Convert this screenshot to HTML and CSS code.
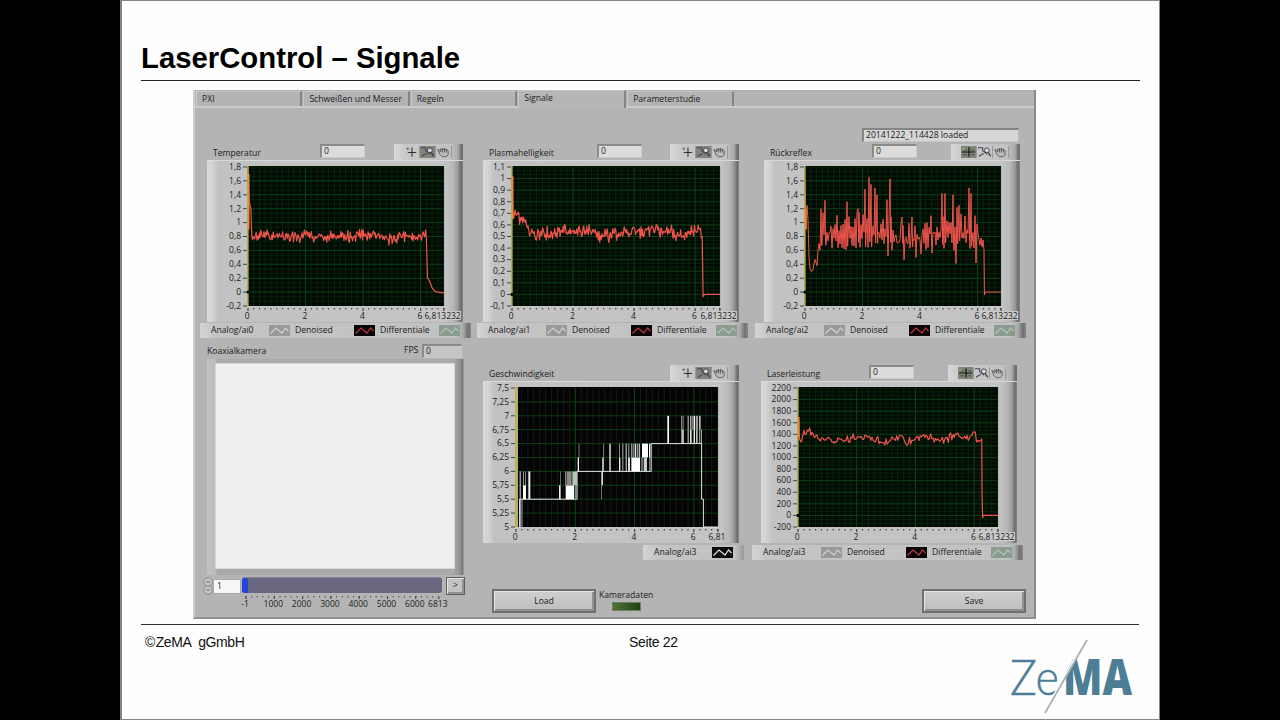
FILE: index.html
```html
<!DOCTYPE html>
<html lang="de">
<head>
<meta charset="utf-8">
<title>LaserControl – Signale</title>
<link rel="stylesheet" href="styles.css">
</head>
<body>
<svg class="defs" width="0" height="0" aria-hidden="true">
  <symbol id="i-cross" viewBox="0 0 16 12"><path d="M8.5 1v10M4 6.5h9" stroke="#222" fill="none"/><path d="M2.5 2.5h3M4 1v3" stroke="#555" stroke-width=".8"/></symbol>
  <symbol id="i-cross-on" viewBox="0 0 16 12"><path d="M8.5 1v10M1 6h14" stroke="#151515" stroke-width="1.3"/><path d="M2 3.5h4M2 9h4M11 3.5h3M11 9h3" stroke="#566050" stroke-width="1.6"/><path d="M1 3h3" stroke="#7fbf5f" stroke-width="1.6"/></symbol>
  <symbol id="i-zoom" viewBox="0 0 16 12"><path d="M1 1.5h5v3l5 4M2 10.5l5-3" stroke="#44465a" stroke-width="1.2" fill="none"/><circle cx="10.5" cy="4.2" r="2.6" fill="#d5d7e4" stroke="#333" stroke-width=".9"/><path d="M12 6.5l2.5 4" stroke="#333" stroke-width="1.3"/></symbol>
  <symbol id="i-hand" viewBox="0 0 16 12"><path d="M2 3l3 3V2.5l2 2V2l2 2V2l2.2 2V3L13 5v4l-2 2H7L4 8.5z" fill="#bbb" stroke="#444" stroke-width=".8"/><path d="M7 4.5v2M9 4v2.5M11 4v2.5" stroke="#444" stroke-width=".8"/></symbol>
  <symbol id="i-wave" viewBox="0 0 20 11"><path d="M1 8.5L6.5 3l6 5L16 3l3 3" fill="none" stroke="currentColor" stroke-width="1.2"/></symbol>
</svg>

<main class="slide">
  <h1 class="slide-title">LaserControl – Signale</h1>

  <section class="panel">
    <nav class="tabs">
      <span class="tab">PXI</span>
      <span class="tab">Schweißen und Messer</span>
      <span class="tab">Regeln</span>
      <span class="tab tab-active">Signale</span>
      <span class="tab">Parameterstudie</span>
    </nav>

    <div class="board">
      <div class="column column-left">
        <article class="graph graph-temp">
          <header class="graph-head"><span class="graph-name">Temperatur</span><span class="field">0</span>
            <span class="palette"><svg><use href="#i-cross"/></svg><svg class="on"><use href="#i-zoom"/></svg><svg><use href="#i-hand"/></svg></span></header>
          <svg class="frame" data-graph="temp" viewBox="0 0 256 162"></svg>
          <footer class="legend"><span>Analog/ai0</span><svg class="swatch grey"><use href="#i-wave"/></svg><span>Denoised</span><svg class="swatch red"><use href="#i-wave"/></svg><span>Differentiale</span><svg class="swatch mint"><use href="#i-wave"/></svg></footer>
        </article>

        <article class="camera">
          <header class="camera-head"><span class="camera-name">Koaxialkamera</span><span>FPS</span><span class="field fps">0</span></header>
          <div class="camera-frame"><div class="camera-view"></div></div>
          <div class="slider-row">
            <svg class="spinner" viewBox="0 0 10 18"><ellipse cx="5" cy="5" rx="4.4" ry="4.2" fill="#c4c4c4" stroke="#8b8b8b"/><ellipse cx="5" cy="13" rx="4.4" ry="4.2" fill="#c4c4c4" stroke="#8b8b8b"/><path d="M3 6l2-2 2 2M3 12l2 2 2-2" fill="none" stroke="#777"/></svg>
            <span class="frame-number">1</span>
            <span class="slider"><i class="slider-knob"></i></span>
            <span class="step">&gt;</span>
          </div>
          <svg class="scale" id="scale" viewBox="0 0 272 16"></svg>
        </article>
      </div>

      <div class="column column-mid">
        <article class="graph graph-plasma">
          <header class="graph-head"><span class="graph-name">Plasmahelligkeit</span><span class="field">0</span>
            <span class="palette"><svg><use href="#i-cross"/></svg><svg class="on"><use href="#i-zoom"/></svg><svg><use href="#i-hand"/></svg></span></header>
          <svg class="frame" data-graph="plasma" viewBox="0 0 256 162"></svg>
          <footer class="legend"><span>Analog/ai1</span><svg class="swatch grey"><use href="#i-wave"/></svg><span>Denoised</span><svg class="swatch red"><use href="#i-wave"/></svg><span>Differentiale</span><svg class="swatch mint"><use href="#i-wave"/></svg></footer>
        </article>
        <article class="graph graph-speed">
          <header class="graph-head"><span class="graph-name">Geschwindigkeit</span>
            <span class="palette"><svg><use href="#i-cross"/></svg><svg class="on"><use href="#i-zoom"/></svg><svg><use href="#i-hand"/></svg></span></header>
          <svg class="frame" data-graph="speed" viewBox="0 0 256 162"></svg>
          <footer class="legend legend-short"><span>Analog/ai3</span><svg class="swatch white"><use href="#i-wave"/></svg></footer>
        </article>
        <div class="actions"><span class="button">Load</span><div class="status"><span>Kameradaten</span><i class="led"></i></div></div>
      </div>

      <div class="column column-right">
        <div class="file-field">20141222_114428 loaded</div>
        <article class="graph graph-reflex">
          <header class="graph-head"><span class="graph-name">Rückreflex</span><span class="field">0</span>
            <span class="palette"><svg class="on"><use href="#i-cross-on"/></svg><svg><use href="#i-zoom"/></svg><svg><use href="#i-hand"/></svg></span></header>
          <svg class="frame" data-graph="reflex" viewBox="0 0 256 162"></svg>
          <footer class="legend"><span>Analog/ai2</span><svg class="swatch grey"><use href="#i-wave"/></svg><span>Denoised</span><svg class="swatch red"><use href="#i-wave"/></svg><span>Differentiale</span><svg class="swatch mint"><use href="#i-wave"/></svg></footer>
        </article>
        <article class="graph graph-laser">
          <header class="graph-head"><span class="graph-name">Laserleistung</span><span class="field">0</span>
            <span class="palette"><svg class="on"><use href="#i-cross-on"/></svg><svg><use href="#i-zoom"/></svg><svg><use href="#i-hand"/></svg></span></header>
          <svg class="frame" data-graph="laser" viewBox="0 0 256 162"></svg>
          <footer class="legend"><span>Analog/ai3</span><svg class="swatch grey"><use href="#i-wave"/></svg><span>Denoised</span><svg class="swatch red"><use href="#i-wave"/></svg><span>Differentiale</span><svg class="swatch mint"><use href="#i-wave"/></svg></footer>
        </article>
        <div class="actions"><span class="button">Save</span></div>
      </div>
    </div>
  </section>

  <footer class="slide-foot">
    <span class="owner">©&#8202;ZeMA&nbsp; gGmbH</span>
    <span class="page">Seite 22</span>
    <svg class="logo" viewBox="0 0 134 80">
      <text class="logo-thin" x="5" y="56" textLength="49" lengthAdjust="spacingAndGlyphs">Ze</text>
      <text class="logo-bold" x="58" y="56" textLength="69" lengthAdjust="spacingAndGlyphs">MA</text>
      <path d="M55 17h15L57 40z" fill="#fefefe"/>
      <path d="M81 1L39 74" stroke="#fefefe" stroke-width="2.6"/>
      <path d="M82 1L40 74" stroke="#a9adb3" stroke-width="1.7"/>
    </svg>
  </footer>
</main>
<script src="graphs.js"></script>
</body>
</html>
```

FILE: styles.css
```css
* { box-sizing: border-box; }
body { margin: 0; background: #000; overflow: hidden; }
.defs { position: absolute; }

.slide {
  width: 1040px;
  height: 720px;
  margin-left: 120px;
  border: 1px solid #858585;
  border-left-width: 2px;
  background: #fefefe;
  color: #111;
  font-family: "Liberation Sans", Arial, sans-serif;
}
.slide-title {
  height: 80px;
  margin: 0 19px 9px 19px;
  padding-top: 40px;
  border-bottom: 1px solid #222;
  font-size: 29.3px;
  line-height: 34px;
  white-space: nowrap;
  color: #000;
}

/* Front panel */
.panel {
  width: 843px;
  height: 529px;
  margin-left: 71px;
  background: #b4b4b4;
  border-left: 2px solid #cdcdcd;
  border-right: 2px solid #898989;
  border-bottom: 2px solid #919191;
  font-family: "Open Sans", "Noto Sans", sans-serif;
  font-size: 8.6px;
  font-weight: 500;
  line-height: 12px;
  color: #1c1c1c;
  white-space: nowrap;
}
.tabs {
  display: flex;
  height: 18px;
  padding-left: 1px;
  border-top: 1px solid #b0b0b0;
  border-bottom: 2px solid #cbcbcb;
}
.tab {
  width: 106.4px;
  height: 15px;
  margin-right: 1px;
  padding: 1px 0 0 5px;
  border-top: 1px solid #c6c6c6;
  border-left: 1px solid #c9c9c9;
  border-right: 2px solid #858585;
  overflow: hidden;
}
.tab-active {
  width: 108px;
  height: 18px;
  margin-top: -1px;
  background: #b6b6b6;
}
.board { display: flex; gap: 5px; padding-left: 5px; }
.column { width: 272px; height: 507px; }
.column-left, .column-mid { padding-top: 36px; }
.column-right { padding-top: 20px; margin-left: 1px; }

/* Graph modules */
.graph { width: 272px; }
.graph-head {
  display: flex;
  width: 256px;
  height: 16px;
  margin-left: 6px;
}
.graph-name { padding: 3px 0 0 6px; width: 113px; }
.field {
  width: 45px;
  height: 14px;
  padding-left: 2px;
  border: solid #8a8a8a;
  border-width: 2px 1px 1px 2px;
  border-right-color: #c9c9c9;
  border-bottom-color: #c9c9c9;
  background: #dcdcdc;
  line-height: 11px;
}
.palette {
  display: flex;
  align-items: center;
  width: 69px;
  height: 16px;
  margin-left: auto;
  padding-left: 10px;
  background: linear-gradient(90deg, #d8d8d8, #c8c8c8 12px, #c2c2c2 56px, #aaa 64px, #707070 67px, #6e6e6e);
}
.palette svg { width: 16px; height: 12px; border-right: 1px solid #999; }
.palette .on { background: #818479; }
.frame {
  display: block;
  width: 256px;
  height: 162px;
  margin-left: 6px;
  box-shadow: inset 0 1px 0 #d9d9d9;
  background: linear-gradient(90deg, #dadada, #d2d2d2 6px, #c2c2c2 11px, #c4c4c4 238px, #b8b8b8 246px, #9a9a9a 251px, #6b6b6b 254px, #858585);
}
.frame text, .scale text { font-size: 8.5px; fill: #1c1c1c; }
.legend {
  display: flex;
  align-items: center;
  width: 271px;
  height: 15px;
  margin-top: 1px;
  padding-left: 11px;
  background: linear-gradient(90deg, #d4d4d4, #cdcdcd 8px, #c4c4c4 14px, #c2c2c2 256px, #aaa 263px, #6f6f6f 268px, #8a8a8a);
}
.legend span { margin-top: -1px; }
.legend span:nth-of-type(1) { width: 58px; }
.legend span:nth-of-type(2) { width: 64px; padding-left: 5px; }
.legend span:nth-of-type(3) { width: 64px; padding-left: 5px; }
.swatch { width: 21px; height: 11px; }
.grey { background: #999; color: #d0d0d0; }
.red { background: #090405; color: #b63a40; }
.mint { background: #8b9b90; color: #aec6b5; }
.white { background: #0c0c0c; color: #e0e0e0; }

.graph-temp .graph-head, .graph-temp .frame { margin-left: 7px; }
.graph-plasma .graph-name { width: 114px; }
.graph-reflex .graph-head, .graph-reflex .frame { margin-left: 9px; }
.graph-reflex .graph-name, .graph-laser .graph-name { width: 108px; }
.graph-speed { margin-top: 27px; }
.graph-laser { width: 272px; margin: 27px 0 0 -2px; }
.graph-laser .graph-head, .graph-laser .frame { margin-left: 8px; }
.graph-laser .legend { margin-left: -1px; }
.graph-speed .legend, .graph-laser .legend { margin-top: 2px; }
.legend-short {
  width: 101px;
  margin-left: 166px;
  background: linear-gradient(90deg, #d4d4d4, #c4c4c4 14px, #c2c2c2 92px, #999);
}

.file-field {
  width: 157px;
  height: 14px;
  margin: 0 0 2px 107px;
  padding-left: 2px;
  border: 2px solid #858585;
  border-right: 1px solid #bbb;
  border-bottom: 1px solid #c6c6c6;
  background: #d6d6d6;
  line-height: 11px;
}

/* Camera block */
.camera { margin-top: 5px; }
.camera-head { display: flex; height: 16px; padding: 1px 0 0 7px; }
.camera-name { width: 197px; padding-top: 1px; }
.fps { width: 40px; margin-left: auto; margin-right: 10px; background: #c5c5c5; }
.camera-frame {
  width: 257px;
  height: 216px;
  margin-left: 7px;
  padding: 4px 9px 6px 8px;
  background: linear-gradient(90deg, #c2c2c2, #bcbcbc 9px, #aaa 10px, #aaa 246px, #929292 253px, #727272 256px, #bbb);
}
.camera-view { height: 206px; background: #efefef; border: 1px solid #d6d6d6; }
.slider-row { display: flex; align-items: center; height: 21px; padding-left: 3px; }
.spinner { width: 10px; height: 18px; }
.frame-number {
  width: 28px;
  height: 15px;
  margin-top: 2px;
  padding-left: 3px;
  border: 1px solid #aaa;
  background: #f6f6f6;
}
.slider {
  width: 200px;
  height: 16px;
  margin-top: -1px;
  margin-left: 1px;
  border-radius: 3px;
  background: #69667f;
  border-top: 1px solid #858398;
  overflow: hidden;
}
.slider-knob { display: block; width: 6px; height: 16px; border-radius: 2px; background: #2346d6; }
.step, .button {
  border: 1px solid #5f5f5f;
  box-shadow: inset 1px 1px 0 #e6e6e6, inset -2px -2px 0 #919191;
  background: #c3c3c3;
  text-align: center;
}
.step { width: 19px; height: 18px; margin-left: 4px; line-height: 15px; }
.scale { display: block; width: 272px; height: 16px; }

/* Bottom row */
.actions { display: flex; padding: 29px 0 0 15px; }
.column-right .actions { padding-left: 167px; }
.button {
  width: 104px;
  height: 24px;
  border: 2px solid #707070;
  background: linear-gradient(#cfcfcf, #bdbdbd);
  line-height: 20px;
}
.status { display: flex; flex-direction: column; margin-left: 3px; }
.led {
  width: 29px;
  height: 9px;
  margin: 1px 0 0 13px;
  border: 1px solid #6e8061;
  background: linear-gradient(90deg, #4e7335, #244312);
}

/* Slide footer */
.slide-foot {
  display: flex;
  width: 998px;
  height: 95px;
  margin: 5px 0 0 19px;
  padding: 8px 0 0 4px;
  border-top: 1px solid #333;
  font-size: 14px;
  letter-spacing: -.42px;
  line-height: 18px;
}
.owner { width: 484px; }
.page { width: 376px; letter-spacing: -.35px; }
.logo { width: 134px; height: 80px; margin-top: 6px; overflow: visible; letter-spacing: 0; flex: none; }
.logo text { fill: #4d7e95; font-size: 50px; font-family: Lato, sans-serif; }
.logo .logo-thin { font-weight: 300; stroke: #4d7e95; stroke-width: .5px; }
.logo .logo-bold { font-weight: 800; font-family: "Open Sans", sans-serif; }
```

FILE: graphs.js
```js
const R = '#f0544c';

// Small repeatable generator so every load draws the same traces.
function noise(seed) {
  let s = seed;
  return () => { s = (s * 16807) % 2147483647; return s / 2147483647; };
}

// Interpolates a centre line and spreads samples around it.
function trace(knots, amp, seed, step) {
  const rnd = noise(seed), out = [];
  for (let x = knots[0][0]; x < knots[knots.length - 1][0]; x += step) {
    let i = 1;
    while (knots[i][0] < x) i++;
    const [x0, y0] = knots[i - 1], [x1, y1] = knots[i];
    const n = rnd() + rnd() - 1;
    out.push([x, y0 + (y1 - y0) * (x - x0) / (x1 - x0) + n * amp]);
  }
  return out;
}

const reflex = (() => {
  const rnd = noise(77);
  const peaks = { 2: 1.25, 16: 1.2, 20: 1.32, 42: 1.3, 53: 1.2, 60: 1.48, 64: 1.65, 66: 1.55, 70: 1.5, 72: 1.4, 82: 1.33, 85: 1.63,
    97: 1.08, 107: 1.08, 126: 1.1, 137: 1.42, 140: 1.42, 148: 1.4, 152: 1.22, 154: 1.25, 164: 1.5, 166: 1.42, 170: 1.1 };
  const dips = { 83: .52, 99: .46, 111: .5, 127: .56, 151: .41, 171: .42, 116: .55 };
  const pts = [[0, 1.6], [1, .9], [2, 1.25], [3, 1.05], [4, .5], [5, .34], [6, .3], [8, .31], [9, .42], [10, .47], [12, .38], [13, .6], [14, .7]];
  for (let x = 15; x < 178; x++) {
    const hi = x < 90 || (x > 135 && x < 168) ? 1.15 : 1;
    let y = x % 2 ? .6 + rnd() * .26 : hi - rnd() * .3;
    if (peaks[x]) y = peaks[x];
    if (dips[x]) y = dips[x];
    pts.push([x, y]);
    if (peaks[x]) pts.push([x + .6, .65 + rnd() * .1]);
  }
  pts.push([178, .75], [179, .6], [179.5, -.04], [180.5, 0], [196, 0]);
  return pts.map(([x, y]) => [x * 6.813 / 196, y]);
})();

const comma = (v, d) => v.toFixed(d).replace(/\.?0+$/, '').replace('.', ',');
const range = (top, step, n, fmt) => Array.from({ length: n }, (_, i) => fmt(Math.round((top - step * i) * 100) / 100));
const one = v => v === 0 ? '0' : Number.isInteger(v) ? String(v) : comma(v, 2);

const graphs = {
  temp: { left: 41, right: 237, top: 1.8, bottom: -.2, labels: range(1.8, .2, 11, one), last: '6,813232',
    data: [[0, 1.8], [.04, 1.3], [.1, 1.2], [.13, .82],
      ...trace([[.15, .79], [.5, .84], [.8, .8], [3, .81], [4.2, .82], [4.9, .77], [5.5, .81], [5.9, .79], [6.22, .82]], .1, 5, .027),
      [6.24, .2], [6.3, .17], [6.4, .06], [6.5, .01], [6.6, 0], [6.813, -.01]] },
  plasma: { left: 29, right: 237, top: 1.1, bottom: -.1, labels: range(1.1, .1, 13, one), last: '6,813232',
    data: [[0, 1], [.03, .68],
      ...trace([[.05, .7], [.4, .63], [.62, .51], [1.2, .52], [2, .55], [2.6, .55], [2.85, .5], [3.3, .52], [4.7, .56], [5.6, .51], [6, .56], [6.22, .53]], .07, 18, .025),
      [6.23, .5], [6.26, -.02], [6.3, 0], [6.813, 0]] },
  reflex: { left: 41, right: 237, top: 1.8, bottom: -.2, labels: range(1.8, .2, 11, one), last: '6,813232', data: reflex },
  laser: { left: 37, right: 237, top: 2200, bottom: -200, labels: range(2200, 200, 13, String), last: '6,813232',
    data: [[.02, 1700], [.05, 1320], [.1, 1270],
      ...trace([[.12, 1350], [.25, 1440], [.4, 1490], [.6, 1340], [.8, 1290], [1.6, 1300], [2.3, 1360], [2.9, 1260], [3.5, 1370], [3.75, 1270], [4, 1330], [4.6, 1350], [4.9, 1270], [5.2, 1370], [5.8, 1330], [6, 1440], [6.1, 1290], [6.25, 1310]], 85, 9, .04),
      [6.26, 1320], [6.27, 350], [6.29, -40], [6.31, 0], [6.813, 0]] },
  speed: { left: 33, right: 235, top: 7.5, bottom: 5, labels: range(7.5, .25, 11, one), last: '6,81' }
};

// Bars of the speed trace: x, width (thirds of a pixel), low, high, shade.
const bars = [
  [11, 3, 5, 6, '#ddd'], [17, 2, 5, 5.5, '#eee'], [21, 9, 5.5, 5.75, '#fff'], [21, 3, 5.75, 6, '#999'], [27, 3, 5.75, 6, '#888'],
  [37, 6, 5.5, 6, '#eee'], [129, 5, 5.5, 5.75, '#eee'], [132, 2, 5.75, 6, '#999'],
  [149, 25, 5.5, 5.75, '#fff'], [176, 7, 5.5, 5.75, '#789078'], [148, 3, 5.75, 6, '#ccc'], [153, 14, 5.75, 6, '#8a8a8a'], [169, 14, 5.75, 6, '#b7c8b7'],
  [185, 4, 6, 6.25, '#fff'], [188, 2, 6.25, 6.5, '#aaa'], [256, 5, 5.75, 6, '#ddd'], [256, 2, 5.5, 5.75, '#aaa'], [259, 4, 6, 6.25, '#fff'], [261, 2, 6.25, 6.5, '#aaa'], [280, 4, 6, 6.5, '#eee'],
  [309, 4, 6, 6.25, '#eee'], [309, 3, 6.25, 6.5, '#888'], [319, 3, 6, 6.5, '#aaa'], [329, 3, 6, 6.5, '#ddd'], [336, 6, 6, 6.25, '#ddd'], [337, 3, 6.25, 6.5, '#aaa'],
  [346, 26, 6, 6.25, '#fff'], [346, 3, 6.25, 6.5, '#ddd'], [352, 3, 6.25, 6.5, '#aaa'], [357, 3, 6.25, 6.5, '#ddd'], [362, 4, 6.25, 6.5, '#999'], [368, 4, 6.25, 6.5, '#bbb'],
  [378, 18, 6.25, 6.5, '#fff'], [376, 4, 6, 6.25, '#999'], [383, 10, 6, 6.25, '#ccc'], [399, 4, 6.25, 6.5, '#fff'], [400, 3, 6, 6.25, '#aaa'],
  [454, 5, 6.5, 7, '#fff'], [496, 3, 6.5, 7, '#bbb'], [499, 4, 6.5, 6.75, '#fff'], [501, 2, 6.75, 7, '#888'],
  [515, 3, 6.5, 7, '#ccc'], [523, 3, 6.75, 7, '#fff'], [522, 5, 6.5, 6.75, '#ddd'], [529, 3, 6.75, 7, '#aaa'], [533, 4, 6.5, 7, '#eee'], [539, 7, 6.75, 7, '#999'], [540, 5, 6.5, 6.75, '#adc0ad'], [549, 5, 6.75, 7, '#bbb'], [549, 2, 6.5, 6.75, '#ddd']
];

function draw(svg) {
  const kind = svg.dataset.graph, g = graphs[kind];
  const T = 7, B = 146, speed = kind === 'speed';
  const unit = (g.right - g.left) / 6.813;
  const X = v => g.left + v * unit;
  const Y = v => B - (v - g.bottom) / (g.top - g.bottom) * (B - T);
  const rows = g.labels.length - 1, rowH = (B - T) / rows;
  let s = `<rect x="${g.left}" y="${T - 1}" width="${g.right - g.left}" height="${B - T + 1}" fill="${speed ? '#030403' : '#020a03'}"/>`;

  for (let i = 1; i <= 34; i++) {
    const x = X(i * .2).toFixed(1);
    s += `<path d="M${x} ${T}V${B}" stroke="${i % 10 ? (speed ? '#141b16' : '#06240c') : '#0c4a18'}" stroke-width="1"/>`;
  }
  if (!speed) for (let i = 0; i < rows * 3; i++) s += `<path d="M${g.left} ${T + i * rowH / 3}H${g.right}" stroke="#062b0d" stroke-width=".7"/>`;
  g.labels.forEach((t, i) => {
    const y = T + i * rowH;
    if (i && i < rows) s += `<path d="M${g.left} ${y}H${g.right}" stroke="#0b3d16" stroke-width="1"/>`;
    s += `<path d="M${g.left - 5} ${y}h4" stroke="#444"/><text x="${g.left - 7}" y="${y + 2.8}" text-anchor="end">${t}</text>`;
  });
  for (let i = 0; i <= 34; i++) s += `<path d="M${X(i * .2)} ${B + 2}v${i % 10 ? 1.4 : 3}" stroke="#444" stroke-width="1.2"/>`;
  s += `<path d="M${g.right} ${B + 2}v3" stroke="#333"/>`;
  [0, 2, 4, 6].forEach(v => { s += `<text x="${X(v) - .7}" y="158.6" text-anchor="middle">${v}</text>`; });
  if (speed) s += `<text x="234" y="158.6" text-anchor="middle">${g.last}</text>`;
  else s += `<rect x="217" y="151" width="37" height="9" fill="#c9c9c9"/><text x="217.5" y="158.6">${g.last}</text>`;

  if (speed) {
    const p = [[0.12, 5], [.12, 5.5], [2.06, 5.5], [2.06, 6], [4.56, 6], [4.56, 6.5], [6.26, 6.5], [6.26, 5.5], [6.32, 5.5], [6.32, 5], [6.813, 5]];
    s += `<polyline points="${p.map(([x, y]) => X(x) + ',' + Y(y)).join(' ')}" fill="none" stroke="#e4e4e4"/>`;
    s += `<path d="M${X(6.25)} ${Y(6.75)}V${Y(6.5)}" stroke="#ccc"/>`;
    bars.forEach(([x, w, lo, hi, c]) => { s += `<rect x="${g.left + x / 3}" y="${Y(hi)}" width="${w / 3}" height="${Y(lo) - Y(hi)}" fill="${c}"/>`; });
    s += `<rect x="${g.left - 1}" y="${T - 1}" width="3" height="${B - T + 1}" fill="#b9ae62"/>`;
  } else {
    s += `<polyline points="${g.data.map(([x, y]) => X(x).toFixed(2) + ',' + Y(y).toFixed(2)).join(' ')}" fill="none" stroke="${R}" stroke-width="${kind === 'reflex' ? 1 : 1.2}" stroke-linejoin="round"/>`;
    const hot = { temp: [1.7, .9], plasma: [1.02, .65], reflex: [1.2, .9], laser: [1700, 1350] }[kind];
    s += `<path d="M${g.left} ${T - 1}V${B}" stroke="#a9a42d" stroke-width="1.4"/>`;
    s += `<path d="M${g.left + .7} ${Y(hot[0])}V${Y(hot[1])}" stroke="#ee8a35" stroke-width="1.6"/>`;
    s += `<circle cx="${g.left}" cy="${Y(0)}" r="1.6" fill="#0a0a0a"/>`;
  }
  svg.innerHTML = s;
}
document.querySelectorAll('[data-graph]').forEach(draw);

const scale = document.getElementById('scale');
let marks = '';
[-1, 1000, 2000, 3000, 4000, 5000, 6000, 6813].forEach(v => {
  const x = 46 + v * .0283;
  marks += `<path d="M${x} 0v3" stroke="#333"/><text x="${x - 1}" y="11" text-anchor="middle">${v}</text>`;
});
for (let v = 0; v < 6800; v += 200) marks += `<path d="M${46 + v * .0283} 0v1.4" stroke="#444"/>`;
scale.innerHTML = marks;
```
